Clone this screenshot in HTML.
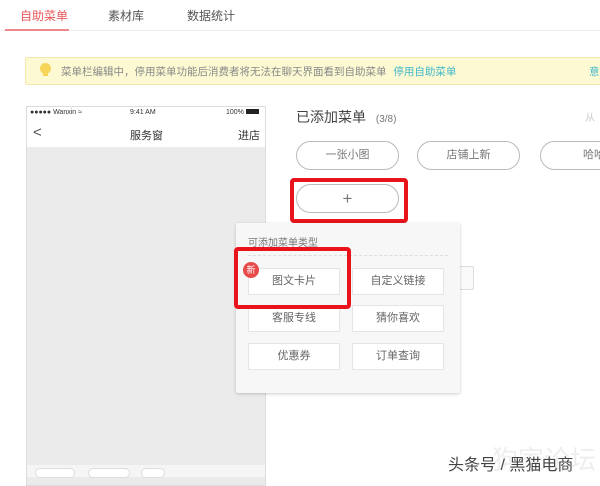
<!DOCTYPE html>
<html><head><meta charset="utf-8"><style>
*{margin:0;padding:0;box-sizing:border-box}
body{width:600px;height:476px;overflow:hidden;background:#fff;font-family:"Liberation Sans","Noto Sans CJK SC",sans-serif;position:relative;color:#333}
.a{position:absolute;white-space:nowrap}
.pill{position:absolute;border:1px solid #bbb;border-radius:15px;font-size:11px;color:#777;text-align:center;line-height:27px;background:#fff}
.btn{position:absolute;width:92px;height:27px;background:#fff;border:1px solid #e5e5e5;font-size:11px;color:#666;text-align:center;line-height:25px}
</style></head><body>
<div class="a" style="left:20px;top:7px;font-size:12px;color:#e8585a">自助菜单</div>
<div class="a" style="left:108px;top:7px;font-size:12px;color:#555">素材库</div>
<div class="a" style="left:187px;top:7px;font-size:12px;color:#555">数据统计</div>
<div class="a" style="left:0;top:30px;width:600px;height:1px;background:#eee"></div>
<div class="a" style="left:5px;top:29px;width:64px;height:2px;background:#ec8a8a"></div>

<div class="a" style="left:25px;top:57px;width:590px;height:28px;background:#fdfad3;border:1px solid #f1eab0;border-radius:2px"></div>
<div class="a" style="left:40px;top:63px;width:11px;height:11px;border-radius:50%;background:#f6d55a"></div>
<div class="a" style="left:43px;top:73px;width:5px;height:3px;background:#f6d55a"></div>
<div class="a" style="left:61px;top:64px;font-size:10.5px;color:#888">菜单栏编辑中，停用菜单功能后消费者将无法在聊天界面看到自助菜单 <span style="color:#3fb5c9;margin-left:4px">停用自助菜单</span></div>
<div class="a" style="left:589px;top:64px;font-size:10.5px;color:#3fb5c9">意</div>

<div class="a" style="left:26px;top:106px;width:240px;height:380px;border:1px solid #ddd;background:#ebebeb"></div>
<div class="a" style="left:27px;top:107px;width:238px;height:40px;background:#fff"></div>
<div class="a" style="left:30px;top:109px;font-size:7px;color:#333">●●●●● Wanxin ≈</div>
<div class="a" style="left:130px;top:109px;font-size:7px;color:#333">9:41 AM</div>
<div class="a" style="left:226px;top:109px;font-size:7px;color:#333">100% <span style="display:inline-block;width:13px;height:5px;background:#222"></span></div>
<div class="a" style="left:33px;top:124px;font-size:15px;color:#555">&lt;</div>
<div class="a" style="left:130px;top:127px;font-size:11px;color:#333">服务窗</div>
<div class="a" style="left:238px;top:127px;font-size:11px;color:#333">进店</div>
<div class="a" style="left:27px;top:465px;width:238px;height:12px;background:#f5f5f5"></div>
<div class="a" style="left:35px;top:468px;width:40px;height:10px;border:1px solid #ddd;border-radius:5px;background:#fff"></div>
<div class="a" style="left:88px;top:468px;width:42px;height:10px;border:1px solid #ddd;border-radius:5px;background:#fff"></div>
<div class="a" style="left:141px;top:468px;width:24px;height:10px;border:1px solid #ddd;border-radius:5px;background:#fff"></div>

<div class="a" style="left:296px;top:107px;font-size:14px;color:#444">已添加菜单 <span style="font-size:10px;color:#777;margin-left:6px">(3/8)</span></div>
<div class="a" style="left:585px;top:109px;font-size:10px;color:#ccc">从</div>
<div class="pill" style="left:296px;top:141px;width:103px;height:29px">一张小图</div>
<div class="pill" style="left:417px;top:141px;width:103px;height:29px">店铺上新</div>
<div class="pill" style="left:540px;top:141px;width:103px;height:29px;text-align:left;padding-left:42px">哈哈</div>
<div class="pill" style="left:296px;top:184px;width:103px;height:29px;font-size:17px">+</div>
<div class="a" style="left:290px;top:178px;width:118px;height:45px;border:4px solid #e8131b;border-radius:4px"></div>

<div class="a" style="left:443px;top:266px;width:31px;height:24px;border:1px solid #ddd;border-radius:2px;background:#fafafa"></div>
<div class="a" style="left:236px;top:223px;width:224px;height:170px;background:#f7f7f7;box-shadow:0 1px 3px rgba(0,0,0,.2);border-radius:2px"></div>
<div class="a" style="left:248px;top:234px;font-size:10px;color:#777">可添加菜单类型</div>
<div class="a" style="left:248px;top:255px;width:200px;border-top:1px dashed #ddd"></div>
<div class="btn" style="left:248px;top:268px">图文卡片</div>
<div class="btn" style="left:352px;top:268px">自定义链接</div>
<div class="btn" style="left:248px;top:305px">客服专线</div>
<div class="btn" style="left:352px;top:305px">猜你喜欢</div>
<div class="btn" style="left:248px;top:343px">优惠券</div>
<div class="btn" style="left:352px;top:343px">订单查询</div>
<div class="a" style="left:243px;top:262px;width:16px;height:16px;border-radius:50%;background:#e84a4a;color:#fff;font-size:9px;text-align:center;line-height:16px">新</div>
<div class="a" style="left:234px;top:247px;width:117px;height:62px;border:4px solid #e8131b;border-radius:4px"></div>

<div class="a" style="left:492px;top:440px;font-size:26px;color:#eee">狗家论坛</div>
<div class="a" style="left:448px;top:451px;font-size:16px;color:#444;text-shadow:0 0 2px #fff">头条号 / 黑猫电商</div>
</body></html>
